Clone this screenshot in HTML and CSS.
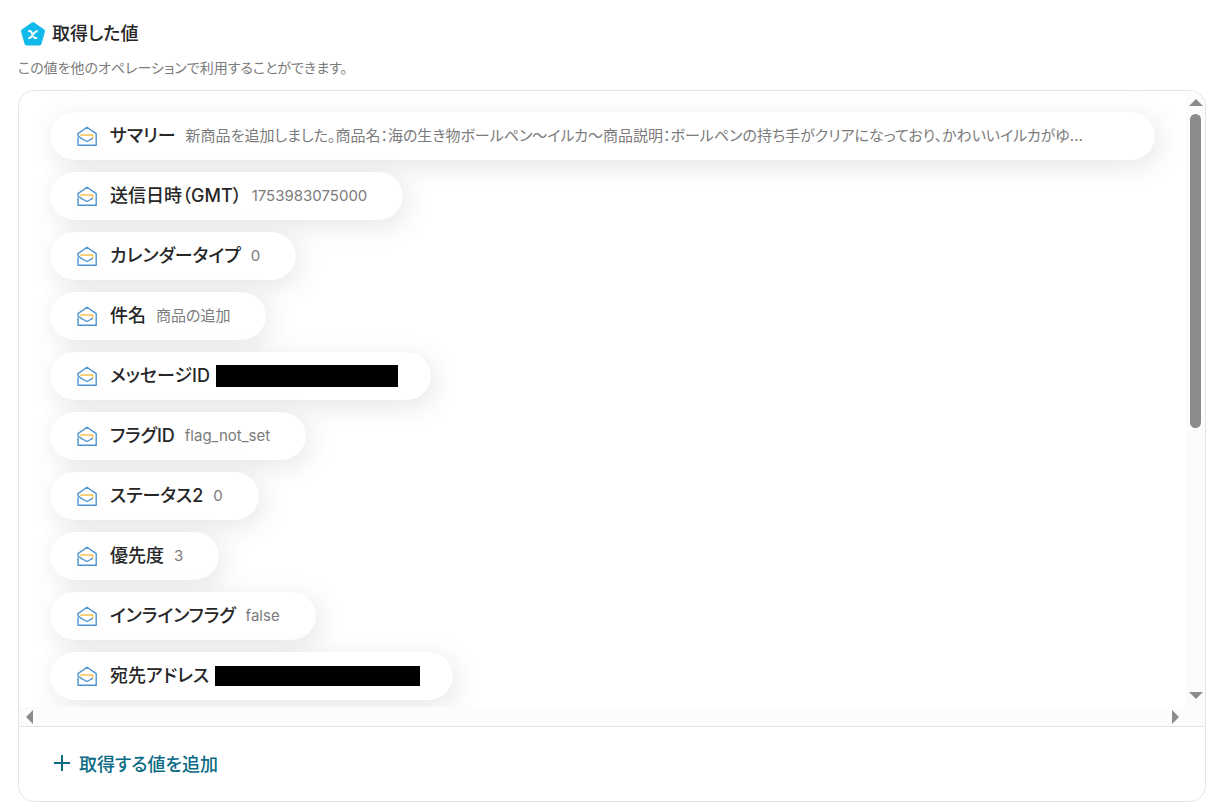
FILE: index.html
```
<!DOCTYPE html>
<html lang="ja">
<head>
<meta charset="utf-8">
<meta name="viewport" content="width=device-width, initial-scale=1">
<title>取得した値</title>
<link rel="stylesheet" href="styles.css">
</head>
<body>
<svg class="sprite" aria-hidden="true">
  <symbol id="mail" viewBox="0 0 20 20">
    <path d="M4 10.2V9h11.7v3.4" fill="none" stroke="#fcc04f" stroke-width="1.4"/>
    <path d="M1 11.5v7.8h18.2V7.6L10 1.2 1 7.6v2.4l4 2.9 5 2.6 5.7-3.1" fill="none" stroke="#4c93d3" stroke-width="1.4" stroke-linejoin="round"/>
  </symbol>
</svg>
<main class="page">
  <header class="head">
    <h1 class="title">
      <svg class="title-icon" viewBox="0 0 26 26" aria-hidden="true">
        <path d="M13 3 23 10.2 19.5 22.5H6.5L3 10.2Z" fill="#12b9eb" stroke="#12b9eb" stroke-width="4" stroke-linejoin="round"/>
        <path d="M8.2 10.1h1.5c1 0 1.5.5 2 1.5l1.8 4c.5 1 .9 1.5 2 1.5H17M17.6 10.2h-.7c-1 0-1.5.4-2.2 1.3l-3.4 4.2c-.8 1.1-1.3 1.5-2.9 1.5" fill="none" stroke="#fff" stroke-width="2"/>
      </svg>
      取得した値
    </h1>
    <p class="lead">この値を他のオペレーションで利用することができます。</p>
  </header>
  <section class="panel">
    <div class="scroller">
      <ul class="list">
        <li class="pill pill-wide"><svg class="icon"><use href="#mail"/></svg><span class="name">サマリー</span><span class="value">新商品を追加しました。商品名：海の生き物ボールペン～イルカ～商品説明：ボールペンの持ち手がクリアになっており、かわいいイルカがゆ...</span></li>
        <li class="pill"><svg class="icon"><use href="#mail"/></svg><span class="name">送信日時（GMT）</span><span class="value">1753983075000</span></li>
        <li class="pill"><svg class="icon"><use href="#mail"/></svg><span class="name">カレンダータイプ</span><span class="value">0</span></li>
        <li class="pill"><svg class="icon"><use href="#mail"/></svg><span class="name">件名</span><span class="value">商品の追加</span></li>
        <li class="pill"><svg class="icon"><use href="#mail"/></svg><span class="name">メッセージID</span><span class="mask mask-id"></span></li>
        <li class="pill"><svg class="icon"><use href="#mail"/></svg><span class="name">フラグID</span><span class="value">flag_not_set</span></li>
        <li class="pill"><svg class="icon"><use href="#mail"/></svg><span class="name">ステータス2</span><span class="value">0</span></li>
        <li class="pill"><svg class="icon"><use href="#mail"/></svg><span class="name">優先度</span><span class="value">3</span></li>
        <li class="pill"><svg class="icon"><use href="#mail"/></svg><span class="name">インラインフラグ</span><span class="value">false</span></li>
        <li class="pill"><svg class="icon"><use href="#mail"/></svg><span class="name">宛先アドレス</span><span class="mask mask-address"></span></li>
      </ul>
      <div class="bar bar-y" aria-hidden="true"><span class="arrow up"></span><span class="track"><span class="thumb"></span></span><span class="arrow down"></span></div>
      <div class="bar bar-x" aria-hidden="true"><span class="arrow left"></span><span class="arrow right"></span></div>
      <div class="bar" aria-hidden="true"></div>
    </div>
    <footer class="foot">
      <button class="add" type="button">
        <svg class="plus" viewBox="0 0 16 16" aria-hidden="true"><path d="M8 0v16M0 8h16" stroke="#0b6b84" stroke-width="2"/></svg>
        取得する値を追加
      </button>
    </footer>
  </section>
</main>
</body>
</html>
```

FILE: styles.css
```
* { box-sizing: border-box; }

body {
  margin: 0;
  background: #fff;
  color: #262626;
  font-family: Inter, "Noto Sans CJK JP", sans-serif;
  font-feature-settings: "palt";
}

.sprite { display: none; }

.page { padding: 20px 21px 2px 18px; }

.title {
  display: flex;
  align-items: center;
  gap: 6px;
  margin: 0;
  padding-left: 2px;
  font-size: 18px;
  line-height: 28px;
  font-weight: 500;
}

.title-icon { width: 26px; height: 26px; }

.lead {
  margin: 10px 0 12px;
  font-size: 14px;
  line-height: 20px;
  color: #7b7b7b;
}

.panel {
  border: 1px solid #e4e4e4;
  border-radius: 16px;
  overflow: hidden;
}

.scroller {
  display: grid;
  grid-template-columns: minmax(0, 1fr) 19px;
  grid-template-rows: auto 19px;
}

.list {
  display: flex;
  flex-direction: column;
  align-items: flex-start;
  gap: 12px;
  margin: 0;
  padding: 21px 31px 7px;
  list-style: none;
  overflow: hidden;
}

.pill {
  display: flex;
  align-items: center;
  max-width: 100%;
  height: 48px;
  padding: 0 36px 0 27px;
  border-radius: 24px;
  background: #fff;
  box-shadow: 4px 6px 28px rgba(0, 0, 0, 0.1), 0 0 1px rgba(0, 0, 0, 0.06);
}

.pill-wide { width: 100%; }

.icon { flex: none; width: 20px; height: 20px; }

.name {
  flex: none;
  margin-left: 13px;
  font-size: 18px;
  line-height: 24px;
  font-weight: 500;
}

.value {
  min-width: 0;
  margin-left: 10px;
  overflow: hidden;
  text-overflow: ellipsis;
  white-space: nowrap;
  font-size: 15px;
  line-height: 24px;
  color: #7b7b7b;
}

.mask { margin: 0 -3px 0 6px; background: #000; }
.mask-id { width: 182px; height: 22px; }
.mask-address { width: 205px; height: 20px; }

.bar {
  display: flex;
  align-items: center;
  justify-content: space-between;
  background: #fcfcfc;
}

.bar-y { flex-direction: column; padding: 8px 0; }
.bar-x { padding: 0 7px; }

.track { flex: 1; width: 11px; padding: 8px 0; }

.thumb {
  display: block;
  height: 55%;
  border-radius: 6px;
  background: #8b8b8b;
}

.arrow { border: 0 solid transparent; }
.up { border-width: 0 7px 7px; border-bottom-color: #8b8b8b; }
.down { border-width: 7px 7px 0; border-top-color: #8b8b8b; }
.left { border-width: 7px 7px 7px 0; border-right-color: #8b8b8b; }
.right { border-width: 7px 0 7px 7px; border-left-color: #8b8b8b; }

.foot {
  padding: 20px 35px 22px;
  border-top: 1px solid #e4e4e4;
}

.add {
  display: flex;
  align-items: center;
  gap: 9px;
  height: 32px;
  padding: 0;
  border: 0;
  background: none;
  color: #0b6b84;
  font: inherit;
  font-feature-settings: inherit;
  font-size: 18px;
  font-weight: 500;
}

.plus { width: 16px; height: 16px; }
```
